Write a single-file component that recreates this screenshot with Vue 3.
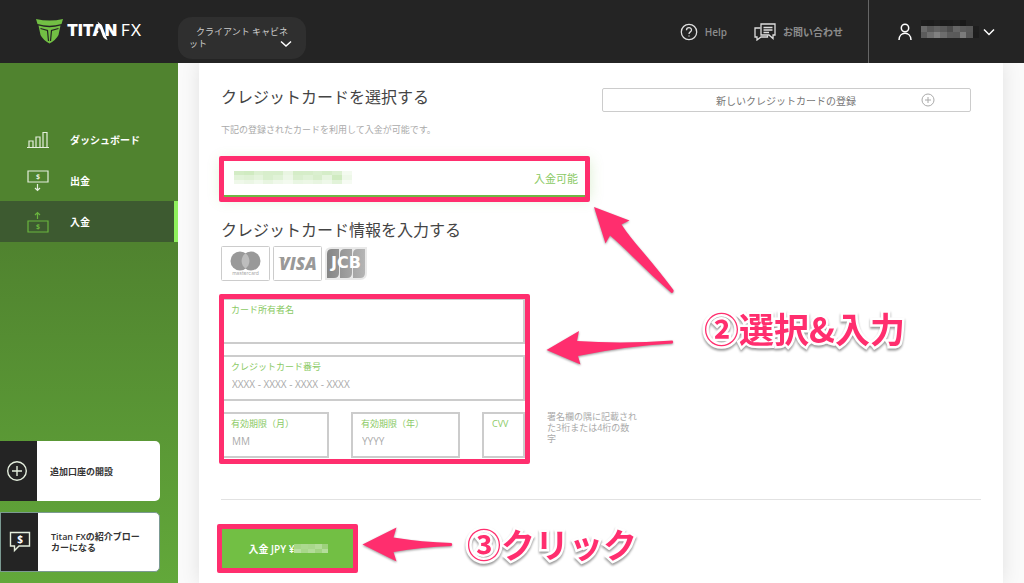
<script setup>
const userTiles = [
  ['#1d1d1d', '#1c1c1c', '#202020', '#1b1b1b', '#1c1c1c', '#1f1f1f', '#191919', '#222222', '#242424'],
  ['#6a6a6a', '#585858', '#626262', '#5a5a5a', '#4c4c4c', '#666666', '#5c5c5c', '#585858', '#1e1e1e'],
  ['#5b5b5b', '#6f6f6f', '#808080', '#6d6d6d', '#5b5b5b', '#5a5a5a', '#7b7b7b', '#565656', '#1d1d1d']
]
const cardTiles = [
  ['#d3ecc5', '#d0ebc1', '#dcf0d1', '#d8eecc', '#d8eecc', '#e9f5e2', '#d5edc8', '#d6edc9', '#daefcf', '#d5edc8', '#dcf0d1', '#f3faef'],
  ['#e2f3d9', '#dff1d5', '#e5f4dd', '#d9efce', '#e0f2d7', '#edf7e8', '#daefcf', '#e0f2d7', '#d8eecc', '#e7f5e0', '#d0ebc1', '#eef8e9'],
  ['#eff8ea', '#ebf6e5', '#f0f9ec', '#e8f5e1', '#eff8ea', '#f3faef', '#e9f6e3', '#ecf7e6', '#e8f5e1', '#eef8e9', '#e2f3d9', '#f6fbf3']
]
const amountTiles = [
  ['#a6d687', '#acd990', '#a9d78c', '#b2dc98', '#9dd17c'],
  ['#b9dfa1', '#a8d78a', '#b3dc99', '#a2d482', '#b4dd9b']
]
</script>

<template>
  <div class="page">
    <header class="topbar">
      <a class="logo" href="#" aria-label="TITAN FX">
        <svg width="108" height="30" viewBox="0 0 108 30" aria-hidden="true">
          <path fill="#72bf44" d="M0 2Q13.500 5 27 2L25.500 7Q13.500 10.500 1.500 7Z" />
          <path fill="#72bf44" d="M2.500 8.500Q13.500 12 24.500 8.500L22.500 18Q20 23 13.500 26.500Q7 23 4.500 18Z" />
          <path class="shield-line" d="M4.500 11.500Q8 12.500 11.500 13.500L12.500 24M22.500 11.500Q19 12.500 15.500 13.500L14.500 24" />
          <text class="logo-bold" x="31" y="19">TITAN</text>
          <text class="logo-light" x="85" y="19">FX</text>
          <path fill="#242424" d="M60.500 20L64 10L68 14L70 20Z" />
          <path fill="#fff" d="M61.500 4.500L66 8.500L71.500 23Q67.500 21.500 66.500 18.500Z" />
        </svg>
      </a>
      <button class="cabinet" type="button" aria-haspopup="listbox">
        クライアント キャビネット
        <svg class="cabinet-chevron" width="12" height="8" viewBox="0 0 12 8" aria-hidden="true"><path d="M1 1.500L6 6L11 1.500" /></svg>
      </button>
      <nav class="top-links">
        <a class="top-link" href="#">
          <svg width="18" height="18" viewBox="0 0 18 18" aria-hidden="true">
            <circle cx="9" cy="9" r="7.700" />
            <path d="M6.500 7.200C6.500 3.900 11.500 3.900 11.500 7C11.500 9 9 8.800 9 11M9 12.500V13.600" />
          </svg>
          Help
        </a>
        <a class="top-link" href="#">
          <svg width="22" height="18" viewBox="0 0 22 18" aria-hidden="true">
            <path d="M7 1H21V12H19V15.500L15 12H7ZM9.500 4.500H18.500M9.500 7H18.500M9.500 9.500H15" />
            <path d="M6.500 5H1V14H3V17L7 14H13.500V12.500" />
          </svg>
          お問い合わせ
        </a>
      </nav>
      <button class="user" type="button" aria-label="アカウント">
        <svg width="14" height="18" viewBox="0 0 14 18" aria-hidden="true">
          <circle cx="7" cy="5" r="3.700" />
          <path d="M1 17C1 8 13 8 13 17" />
        </svg>
        <span class="mosaic user-mosaic" aria-hidden="true">
          <span v-for="(row, r) in userTiles" :key="r" class="mosaic-row">
            <i v-for="(c, i) in row" :key="i" :style="{ background: c }"></i>
          </span>
        </span>
        <svg width="12" height="8" viewBox="0 0 12 8" aria-hidden="true"><path d="M1 1.500L6 6.500L11 1.500" /></svg>
      </button>
    </header>

    <div class="body">
      <aside class="sidebar">
        <nav class="menu">
          <a class="menu-item" href="#">
            <svg width="22" height="22" viewBox="0 0 22 22" aria-hidden="true">
              <path d="M0 18.500H22M2 18V12H6V18M9 18V8H13V18M16 18V3.500H20V18" />
            </svg>
            ダッシュボード
          </a>
          <a class="menu-item" href="#">
            <svg width="22" height="22" viewBox="0 0 22 22" aria-hidden="true">
              <path d="M1 1H21V12H1ZM10.500 14V20.500M8 18L10.500 20.500L13 18" />
              <text x="11" y="9">$</text>
            </svg>
            出金
          </a>
          <a class="menu-item active" href="#" aria-current="page">
            <svg width="22" height="22" viewBox="0 0 22 22" aria-hidden="true">
              <path d="M1 10H21V21H1ZM10.500 8V1.500M8 4L10.500 1.500L13 4" />
              <text x="11" y="18">$</text>
            </svg>
            入金
          </a>
        </nav>
        <div class="promos">
          <a class="promo" href="#">
            <span class="promo-icon">
              <svg width="22" height="22" viewBox="0 0 22 22" aria-hidden="true">
                <circle cx="11" cy="11" r="9.300" /><path d="M6 11H16M11 6V16" />
              </svg>
            </span>
            <span class="promo-text">追加口座の開設</span>
          </a>
          <a class="promo outlined" href="#">
            <span class="promo-icon">
              <svg width="22" height="22" viewBox="0 0 22 22" aria-hidden="true">
                <path d="M1.500 1.500H20.500V15H10L5.500 19.500V15H1.500Z" />
                <text x="11" y="12">$</text>
              </svg>
            </span>
            <span class="promo-text">Titan FXの紹介ブローカーになる</span>
          </a>
        </div>
      </aside>

      <main class="main">
        <form class="panel" @submit.prevent>
          <section class="select-row">
            <div>
              <h2>クレジットカードを選択する</h2>
              <p class="hint">下記の登録されたカードを利用して入金が可能です。</p>
              <label class="saved-card marked">
                <input class="sr-only" type="radio" name="card" checked>
                <span class="mosaic card-mosaic" aria-hidden="true">
                  <span v-for="(row, r) in cardTiles" :key="r" class="mosaic-row">
                    <i v-for="(c, i) in row" :key="i" :style="{ background: c }"></i>
                  </span>
                </span>
                <span class="available">入金可能</span>
              </label>
            </div>
            <button class="new-card" type="button">
              新しいクレジットカードの登録
              <svg width="14" height="14" viewBox="0 0 14 14" aria-hidden="true">
                <circle cx="7" cy="7" r="6" /><path d="M4 7H10M7 4V10" />
              </svg>
            </button>
          </section>

          <h2 class="second-title">クレジットカード情報を入力する</h2>
          <div class="brands">
            <svg width="49" height="35" viewBox="0 0 49 35" role="img" aria-label="mastercard">
              <rect class="brand-edge" x=".5" y=".5" width="48" height="34" rx="1" />
              <circle cx="19" cy="15" r="9.500" fill="#999" />
              <circle cx="30" cy="15" r="9.500" fill="#999" />
              <path fill="#bdbdbd" d="M24.500 7.300A9.500 9.500 0 0 1 24.500 22.700A9.500 9.500 0 0 1 24.500 7.300Z" />
              <text class="mc-name" x="24.500" y="29">mastercard</text>
            </svg>
            <svg width="49" height="35" viewBox="0 0 49 35" aria-hidden="true">
              <rect class="brand-edge" x=".5" y=".5" width="48" height="34" rx="1" />
              <text class="visa-name" x="25" y="24">VISA</text>
              <path fill="#999" d="M5 11H11L12 15Q9 12 5 11Z" />
            </svg>
            <svg width="44" height="35" viewBox="0 0 44 35" aria-hidden="true">
              <defs>
                <linearGradient id="jcb"><stop offset="0" stop-color="#858585" /><stop offset="1" stop-color="#b5b5b5" /></linearGradient>
              </defs>
              <path fill="#e9e9e9" d="M7 1H42V27Q42 34 35 34H0V7Q0 1 7 1Z" />
              <path fill="url(#jcb)" d="M7 3H14V27Q14 32 9 32H2V8Q2 3 7 3ZM20 3H27V27Q27 32 22 32H15V8Q15 3 20 3ZM33 3H40V27Q40 32 35 32H28V8Q28 3 33 3Z" />
              <text class="jcb-name" x="21" y="22">JCB</text>
            </svg>
          </div>

          <div class="form-row">
            <div class="fields marked">
              <div class="field wide">
                <label for="holder">カード所有者名</label>
                <input id="holder" type="text">
              </div>
              <div class="field wide">
                <label for="number">クレジットカード番号</label>
                <input id="number" type="text" placeholder="XXXX - XXXX - XXXX - XXXX">
              </div>
              <div class="field">
                <label for="month">有効期限（月）</label>
                <input id="month" type="text" placeholder="MM">
              </div>
              <div class="field">
                <label for="year">有効期限（年）</label>
                <input id="year" type="text" placeholder="YYYY">
              </div>
              <div class="field">
                <label for="cvv">CVV</label>
                <input id="cvv" type="text">
              </div>
            </div>
            <p class="cvv-hint">署名欄の隅に記載された3桁または4桁の数字</p>
          </div>

          <hr>
          <button class="submit marked" type="submit">
            入金 JPY ¥
            <span class="mosaic amount-mosaic" aria-hidden="true">
              <span v-for="(row, r) in amountTiles" :key="r" class="mosaic-row">
                <i v-for="(c, i) in row" :key="i" :style="{ background: c }"></i>
              </span>
            </span>
          </button>

          <svg class="arrows" width="804" height="520" viewBox="199 63 804 520" aria-hidden="true">
            <path d="M594 207L629.500 220.500L621.500 224.500Q629 236 643 252Q660 272 673.500 290Q674 293 671.500 293Q652 276 633 257Q620 244 610 235.500L605.500 243.500Z" />
            <path d="M546.500 350L579 331L577 341Q623 344 672.500 340.500Q674 342 672.500 343.500Q626 346 578 356L580.500 364.500Z" />
            <path d="M362.500 544.500L396.500 527.500L393.500 537.500Q422 542 451.500 543Q453 544.500 451.500 546Q422 547 393.500 552L396.500 561.500Z" />
          </svg>
          <strong class="callout step-two">②選択&amp;入力</strong>
          <strong class="callout step-three">③クリック</strong>
        </form>
      </main>
    </div>
  </div>
</template>

<style>
body {
  margin: 0;
}
</style>

<style scoped>
.page {
  display: flex;
  flex-direction: column;
  height: 100vh;
  overflow: hidden;
  font-family: "Open Sans", "Noto Sans CJK JP", sans-serif;
  color: #444;
}
.page *,
.page *::after {
  box-sizing: border-box;
}
a {
  color: inherit;
  text-decoration: none;
}
button,
input {
  margin: 0;
  padding: 0;
  border: 0;
  background: none;
  font-family: inherit;
}
svg {
  flex: none;
  display: block;
}

.topbar {
  display: flex;
  align-items: center;
  flex: none;
  height: 63px;
  background: #242424;
}
.logo {
  width: 178px;
  padding-left: 36px;
}
.logo-bold,
.logo-light {
  font-family: Inter, sans-serif;
  font-size: 16px;
  fill: #fff;
}
.logo-bold {
  font-weight: 900;
}
.shield-line {
  fill: none;
  stroke: #242424;
  stroke-width: 1.200;
}
.cabinet {
  position: relative;
  width: 128px;
  height: 42px;
  margin-top: 13px;
  padding: 0 12px 0 11px;
  border-radius: 14px;
  background: #2f2f2f;
  color: #ccc;
  font-size: 9px;
  line-height: 12px;
  text-align: left;
  text-indent: 7px;
}
.cabinet-chevron {
  position: absolute;
  right: 14px;
  bottom: 11px;
}
.cabinet-chevron,
.user svg,
.top-link svg {
  fill: none;
  stroke: #ddd;
  stroke-width: 1.500;
}
.cabinet-chevron,
.user svg {
  stroke: #fff;
}
.top-links {
  display: flex;
  gap: 27px;
  margin-left: auto;
  padding-right: 25px;
}
.top-link {
  display: flex;
  align-items: center;
  gap: 7px;
  color: #8c8c8c;
  font-size: 10px;
  font-weight: 600;
}
.top-link svg {
  stroke-width: 1.300;
}
.user {
  display: flex;
  align-items: center;
  gap: 9px;
  width: 156px;
  height: 100%;
  padding-left: 29px;
  border-left: 1px solid #666;
}
.mosaic {
  display: flex;
  flex-direction: column;
}
.mosaic-row {
  display: flex;
  flex: 1;
}
.mosaic-row i {
  flex: 1;
}
.user-mosaic {
  width: 58px;
  height: 18px;
  margin-bottom: 6px;
}
.user svg:last-child {
  margin-left: -5px;
}

.body {
  display: flex;
  flex: 1;
  min-height: 0;
}
.sidebar {
  display: flex;
  flex-direction: column;
  flex: none;
  width: 178px;
  padding: 56px 0 11px;
  background: linear-gradient(#50832f 0%, #50832f 35%, #62a83a 100%);
  color: #fff;
}
.menu-item {
  display: flex;
  align-items: center;
  gap: 21px;
  height: 41px;
  padding-left: 27px;
  font-size: 10px;
  font-weight: 700;
}
.menu-item svg,
.promo-icon svg {
  fill: none;
  stroke: #e4eedd;
  stroke-width: 1.200;
}
.menu-item text {
  fill: #e4eedd;
  stroke: none;
  font-size: 7px;
  text-anchor: middle;
}
.menu-item.active {
  border-right: 4px solid #8ff05c;
  background: #3d5a30;
}
.menu-item.active svg {
  stroke: #6ab53e;
}
.menu-item.active text {
  fill: #6ab53e;
}
.promos {
  display: flex;
  flex-direction: column;
  gap: 11px;
  width: 160px;
  margin-top: auto;
}
.promo {
  display: flex;
  height: 60px;
  overflow: hidden;
  border-radius: 0 5px 5px 0;
  background: #fff;
  color: #333;
  font-size: 9px;
  font-weight: 600;
  line-height: 11px;
}
.promo.outlined {
  border: 1px solid #7b9a92;
}
.promo-icon {
  display: flex;
  align-items: center;
  justify-content: center;
  flex: none;
  width: 37px;
  padding-right: 4px;
  background: #242424;
}
.outlined .promo-icon {
  padding-right: 0;
}
.promo-icon svg {
  stroke-width: 1.400;
}
.promo-icon text {
  fill: #fff;
  stroke: none;
  font-size: 10px;
  font-weight: 700;
  text-anchor: middle;
}
.promo-text {
  align-self: center;
  padding: 0 18px 0 13px;
}

.main {
  flex: 1;
  padding: 0 21px;
  background: #fafafa;
  overflow: hidden;
}
.panel {
  position: relative;
  min-height: 100%;
  padding: 22px 22px 0;
  background: #fff;
  box-shadow: 0 0 18px rgba(0, 0, 0, 0.1);
}
.select-row {
  display: grid;
  grid-template-columns: 1fr 1fr;
  align-items: start;
  gap: 12px;
  padding-right: 10px;
}
h2 {
  margin: 0;
  font-size: 16px;
  font-weight: 400;
  line-height: 24px;
}
.hint {
  margin: 14px 0 21px;
  color: #aaa;
  font-size: 9px;
  line-height: 14px;
}
.marked {
  position: relative;
}
.marked::after {
  content: "";
  position: absolute;
  border: 5px solid #ff2e6e;
  border-radius: 2px;
  pointer-events: none;
}
.saved-card {
  display: flex;
  align-items: center;
  justify-content: space-between;
  height: 39px;
  padding: 2px 12px 0 13px;
  border-bottom: 2px solid #6fb844;
  background: #fff;
  box-shadow: 0 2px 14px rgba(114, 191, 68, 0.25);
}
.saved-card::after {
  inset: -2px 0 -7px -2px;
}
.sr-only {
  position: absolute;
  width: 1px;
  height: 1px;
  opacity: 0;
}
.card-mosaic {
  width: 118px;
  height: 13px;
}
.available {
  color: #8bca65;
  font-size: 11px;
}
.new-card {
  display: flex;
  align-items: center;
  justify-content: center;
  gap: 65px;
  height: 24px;
  margin-top: 3px;
  padding-left: 78px;
  border: 1px solid #ccc;
  border-radius: 2px;
  color: #777;
  font-size: 10px;
}
.new-card svg {
  fill: none;
  stroke: #aaa;
}
.second-title {
  margin-top: 21px;
}
.brands {
  display: flex;
  gap: 3px;
  margin-top: 4px;
}
.brand-edge {
  fill: #fff;
  stroke: #ccc;
}
.mc-name {
  fill: #aaa;
  font-family: Inter, sans-serif;
  font-size: 5px;
  text-anchor: middle;
}
.visa-name {
  fill: #999;
  font-size: 17px;
  font-weight: 800;
  font-style: italic;
  text-anchor: middle;
}
.jcb-name {
  fill: #fff;
  font-family: "DejaVu Sans", sans-serif;
  font-size: 16px;
  font-weight: 700;
  text-anchor: middle;
}
.form-row {
  display: flex;
  align-items: flex-end;
  gap: 22px;
  margin-top: 17px;
}
.fields {
  display: grid;
  grid-template-columns: 108px 109px 43px;
  gap: 11px 22px;
}
.fields::after {
  inset: -4px -5px -6px -2px;
}
.field {
  display: flex;
  flex-direction: column;
  height: 46px;
  padding: 4px 0 0 8px;
  border: 2px solid #ccc;
}
.field.wide {
  grid-column: 1 / -1;
}
.field label {
  color: #8bca65;
  font-size: 9px;
  line-height: 12px;
  white-space: nowrap;
}
.field input {
  width: 100%;
  height: 22px;
  padding-left: 1px;
  color: #666;
  font-size: 10px;
}
.field input::placeholder {
  color: #aaa;
  opacity: 1;
}
.cvv-hint {
  width: 90px;
  margin: 0 0 14px;
  color: #aaa;
  font-size: 9px;
  line-height: 11px;
}
hr {
  height: 1px;
  margin: 41px 0 27px;
  border: 0;
  background: #e2e2e2;
}
.submit {
  display: flex;
  align-items: center;
  justify-content: center;
  width: 135px;
  height: 43px;
  background: #72bf44;
  color: #fff;
  font-size: 10px;
  font-weight: 600;
}
.submit::after {
  inset: -3px -2px -3px -4px;
}
.amount-mosaic {
  width: 34px;
  height: 9px;
}
.arrows {
  position: absolute;
  top: 0;
  left: 0;
  fill: #ff2e6e;
  filter: drop-shadow(0 1px 1px rgba(0, 0, 0, 0.4));
  pointer-events: none;
}
.callout {
  position: absolute;
  color: #ff2e6e;
  font-family: "Noto Sans CJK JP", sans-serif;
  font-size: 34px;
  font-weight: 700;
  line-height: 48px;
  white-space: nowrap;
  -webkit-text-stroke: 5px #fff;
  paint-order: stroke fill;
  filter: drop-shadow(0 2px 1px rgba(0, 0, 0, 0.4));
  pointer-events: none;
}
.step-two {
  top: 241px;
  left: 505px;
  font-size: 35px;
}
.step-three {
  top: 457px;
  left: 268px;
}
</style>
